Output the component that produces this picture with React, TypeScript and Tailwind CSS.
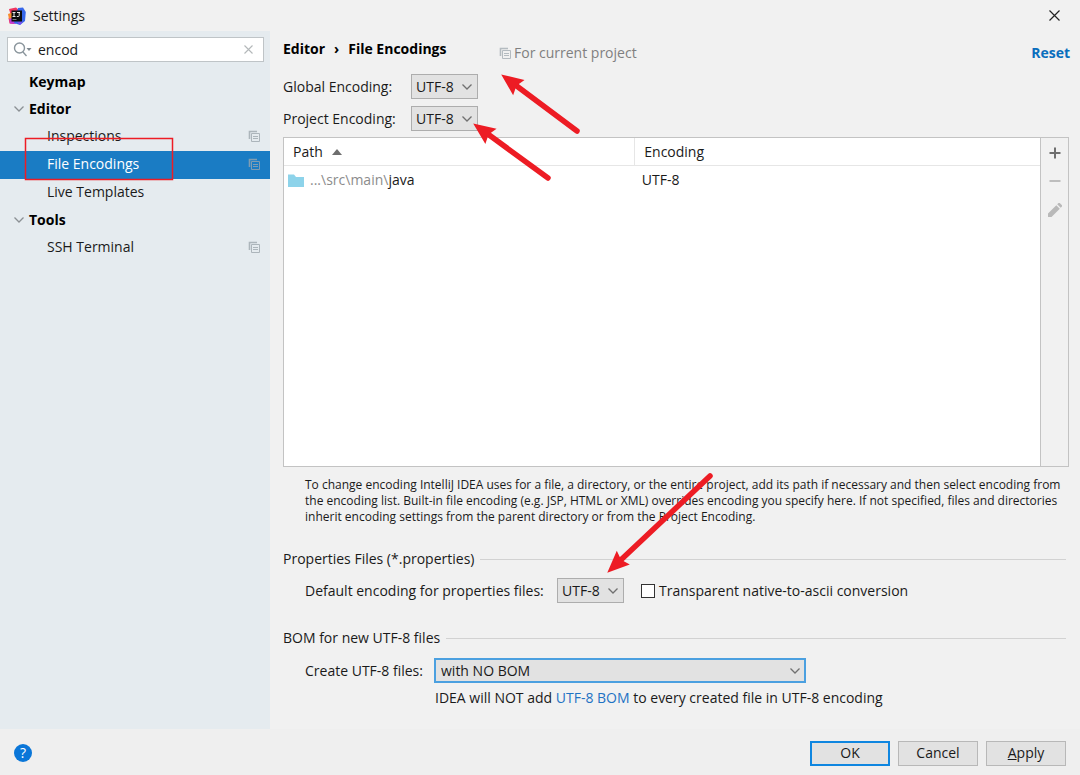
import React from 'react';

const ScopeIcon: React.FC<{ className?: string }> = ({ className = '' }) => (
    <svg width="12" height="12" viewBox="0 0 12 12" className={`shrink-0 ${className}`} fill="none" stroke="currentColor" aria-hidden="true">
        <path d="M1.5 9V1.5H9" strokeWidth="1.6" />
        <path d="M3.5 3.5h8v8h-8z" />
        <path d="M5 6.5h5 M5 8.5h5" />
    </svg>
);

const Chevron: React.FC<{ className?: string }> = ({ className = '' }) => (
    <svg width="10" height="6" viewBox="0 0 10 6" className={className} fill="none" stroke="currentColor" strokeWidth="1.3" aria-hidden="true">
        <path d="M0.5 0.5 5 5 9.5 0.5" />
    </svg>
);

const Logo: React.FC = () => (
    <svg width="18" height="18" viewBox="0 0 18 18" aria-hidden="true">
        <path d="M1 2 8 0.5 13 5 6 17 1.5 16.5 0.5 11 3 9z" fill="#f0355f" />
        <path d="M1 9 5 8 8 17 2 16.5z" fill="#c13cd8" />
        <path d="M0 7 4 5.5V11L1 12z" fill="#f98a2b" />
        <path d="M10 1 15 0.5 17.8 5 17 14 12 18 6 16z" fill="#3767ea" />
        <path d="M9 15 15 14.5 12 18z" fill="#7a4df0" />
        <path d="M3.5 3.5h10.5v11H3.5z" fill="#0b0b0d" />
        <path d="M4.5 5.5h3M6 5.5v4M4.5 9.5h3M9 5.5h3M11.2 5.5v3.2q0 0.8-0.8 0.8H8.8" fill="none" stroke="#fff" strokeWidth="0.9" />
        <path d="M4.5 12.5h4" stroke="#9a9a9a" strokeWidth="0.8" />
    </svg>
);

type ItemProps = { label: string; scoped?: boolean; selected?: boolean };

const TreeItem: React.FC<ItemProps> = ({ label, scoped, selected }) => (
    <li>
        <button
            type="button"
            className={`flex h-7 w-full items-center justify-between pb-[2px] pl-[47px] pr-[10px] text-left ${selected ? 'bg-[#1a7cc4] text-white' : ''}`}
        >
            {label}
            {scoped && <ScopeIcon className={selected ? 'text-[#7f9db2]' : 'text-[#acb5bb]'} />}
        </button>
    </li>
);

const TreeGroup: React.FC<{ label: string; open?: boolean }> = ({ label, open }) => (
    <li>
        <button type="button" className="flex h-[27px] w-full items-center pb-[2px] pl-[14px] text-left font-bold text-black">
            <span className="w-[15px]">{open && <Chevron className="text-[#8b9094]" />}</span>
            {label}
        </button>
    </li>
);

const Combo: React.FC<{ id: string; value: string; wide?: boolean }> = ({ id, value, wide }) => (
    <div className={`relative ${wide ? 'w-[372px]' : 'w-[67px]'}`}>
        <select
            id={id}
            defaultValue={value}
            className={`block h-[25px] w-full appearance-none bg-[#e2e2e2] outline-none ${wide ? 'border-2 border-[#4ba0e0] pl-[5px]' : 'border border-[#adadad] pl-1'}`}
        >
            <option>{value}</option>
        </select>
        <Chevron className="pointer-events-none absolute right-[6px] top-[10px] text-[#707070]" />
    </div>
);

const SectionTitle: React.FC<{ children: React.ReactNode }> = ({ children }) => (
    <div className="mr-1 flex items-center gap-[6px]">
        <h2>{children}</h2>
        <span className="h-px flex-1 bg-[#d2d2d2]" />
    </div>
);

const Arrow: React.FC<{ from: [number, number]; to: [number, number] }> = ({ from, to }) => {
    const angle = (Math.atan2(to[1] - from[1], to[0] - from[0]) * 180) / Math.PI;
    const length = Math.hypot(to[0] - from[0], to[1] - from[1]);
    return (
        <g transform={`translate(${from[0]} ${from[1]}) rotate(${angle})`} fill="#ed1c24">
            <path d={`M0 0H${length - 15}`} stroke="#ed1c24" strokeWidth="5.5" strokeLinecap="round" />
            <path d={`M${length + 1} 0 l-22 -9.5 l3 9.5 l-3 9.5z`} />
        </g>
    );
};

export default function App() {
    return (
        <div className="relative flex min-h-screen flex-col bg-[#f1f1f1] font-['Open_Sans','Noto_Sans_CJK_SC',sans-serif] text-sm leading-5 text-[#1a1a1a]">
            {/* Title bar */}
            <header className="flex h-[31px] items-center pl-2 pr-5">
                <Logo />
                <h1 className="ml-[7px] flex-1">Settings</h1>
                <button type="button" aria-label="Close">
                    <svg width="11" height="11" viewBox="0 0 11 11" stroke="#222" strokeWidth="1.2" aria-hidden="true">
                        <path d="M0.5 0.5 10.5 10.5M10.5 0.5 0.5 10.5" />
                    </svg>
                </button>
            </header>

            <div className="flex flex-1">
                {/* Settings tree */}
                <aside className="w-1/4 shrink-0 bg-[#e5ebef] pt-[6px]">
                    <div className="ml-[7px] mr-[6px] flex h-[25px] items-center border border-[#bfc4c7] bg-white pl-[5px] pr-[10px]">
                        <svg width="20" height="15" viewBox="0 0 20 15" fill="none" stroke="#8a959c" strokeWidth="1.4" aria-hidden="true">
                            <circle cx="6.5" cy="6" r="5" />
                            <path d="m10 10 3.5 4" />
                            <path d="M13.5 6h5L16 9z" fill="#7f8990" stroke="none" />
                        </svg>
                        <input type="text" aria-label="Search settings" defaultValue="encod" className="ml-[5px] min-w-0 flex-1 bg-transparent outline-none" />
                        <button type="button" aria-label="Clear search">
                            <svg width="9" height="9" viewBox="0 0 9 9" stroke="#b4b8ba" strokeWidth="1.1" aria-hidden="true">
                                <path d="M0.5 0.5 8.5 8.5M8.5 0.5 0.5 8.5" />
                            </svg>
                        </button>
                    </div>
                    <ul className="mt-[7px]">
                        <TreeGroup label="Keymap" />
                        <TreeGroup label="Editor" open />
                        <TreeItem label="Inspections" scoped />
                        <TreeItem label="File Encodings" scoped selected />
                        <TreeItem label="Live Templates" />
                        <TreeGroup label="Tools" open />
                        <TreeItem label="SSH Terminal" scoped />
                    </ul>
                </aside>

                <main className="flex min-w-0 flex-1 flex-col pb-[21px] pl-[13px] pr-[10px]">
                    <div className="flex h-[43px] items-center">
                        <nav className="mb-[7px] flex w-[216px] gap-[9px] font-bold text-black">
                            <span>Editor</span>
                            <span>›</span>
                            <span>File Encodings</span>
                        </nav>
                        <span className="flex flex-1 items-center gap-[3px] text-[#808080]">
                            <ScopeIcon className="text-[#b4bbc0]" />
                            For current project
                        </span>
                        <a href="#reset" className="font-bold text-[#0a6ebd]">Reset</a>
                    </div>

                    <div className="grid grid-cols-[128px_auto] items-center gap-y-[7px]">
                        <label htmlFor="global">Global Encoding:</label>
                        <Combo id="global" value="UTF-8" />
                        <label htmlFor="project">Project Encoding:</label>
                        <Combo id="project" value="UTF-8" />
                    </div>

                    {/* Per-path encodings */}
                    <div className="mr-px mt-[6px] flex flex-1 border border-[#c3c3c3]">
                        <div className="flex-1 bg-white">
                            <table className="w-full table-fixed text-left">
                                <thead>
                                    <tr className="h-[27px] border-b border-[#e6e6e6]">
                                        <th className="w-[46.4%] border-r border-[#e6e6e6] pl-[9px] pt-[2px] font-normal">
                                            <span className="flex items-center gap-[9px]">
                                                Path
                                                <svg width="10" height="6" viewBox="0 0 10 6" fill="#6e6e6e" aria-hidden="true">
                                                    <path d="M0 6 5 0l5 6z" />
                                                </svg>
                                            </span>
                                        </th>
                                        <th className="pl-[9px] pt-[2px] font-normal">Encoding</th>
                                    </tr>
                                </thead>
                                <tbody>
                                    <tr className="h-[30px]">
                                        <td className="pl-1">
                                            <span className="flex items-center gap-[6px]">
                                                <svg width="16" height="13" viewBox="0 0 16 13" fill="#8dd3ea" aria-hidden="true">
                                                    <path d="M0 0.5h6l2 2.5h8v10H0z" />
                                                </svg>
                                                <span><span className="text-[#8c8c8c]">...\src\main\</span>java</span>
                                            </span>
                                        </td>
                                        <td className="pl-[7px]">UTF-8</td>
                                    </tr>
                                </tbody>
                            </table>
                        </div>
                        <div className="flex w-[28px] flex-col items-center gap-[16px] border-l border-[#c3c3c3] pt-[9px]">
                            <button type="button" aria-label="Add">
                                <svg width="12" height="12" viewBox="0 0 12 12" className="block" stroke="#6e6e6e" strokeWidth="2" aria-hidden="true">
                                    <path d="M6 0.5v11M0.5 6h11" />
                                </svg>
                            </button>
                            <button type="button" aria-label="Remove" disabled>
                                <svg width="12" height="12" viewBox="0 0 12 12" className="block" stroke="#bdbdbd" strokeWidth="2" aria-hidden="true">
                                    <path d="M0.5 6h11" />
                                </svg>
                            </button>
                            <button type="button" aria-label="Edit" disabled>
                                <svg width="14" height="14" viewBox="0 0 14 14" className="block" fill="#b9b9b9" aria-hidden="true">
                                    <path d="M0 14v-3.5L8.3 2.2l3.5 3.5L3.5 14z M9.2 1.3 10.5 0h1.2L14 2.3v1.2l-1.3 1.3z" />
                                </svg>
                            </button>
                        </div>
                    </div>

                    <p className="mt-[10px] whitespace-nowrap pl-[22px] text-xs leading-4">
                        To change encoding IntelliJ IDEA uses for a file, a directory, or the entire project, add its path if necessary and then select encoding from
                        <br />
                        the encoding list. Built-in file encoding (e.g. JSP, HTML or XML) overrides encoding you specify here. If not specified, files and directories
                        <br />
                        inherit encoding settings from the parent directory or from the Project Encoding.
                    </p>

                    <section className="mt-[24px]">
                        <SectionTitle>Properties Files (*.properties)</SectionTitle>
                        <div className="mt-[9px] flex items-center pl-[22px]">
                            <label htmlFor="properties" className="w-[252px]">Default encoding for properties files:</label>
                            <Combo id="properties" value="UTF-8" />
                            <label className="ml-[17px] flex items-center gap-1">
                                <input type="checkbox" className="size-[14px] appearance-none border border-[#333] bg-white" />
                                Transparent native-to-ascii conversion
                            </label>
                        </div>
                    </section>

                    <section className="mt-[25px]">
                        <SectionTitle>BOM for new UTF-8 files</SectionTitle>
                        <div className="mt-[10px] flex items-center pl-[22px]">
                            <label htmlFor="bom" className="w-[129px]">Create UTF-8 files:</label>
                            <Combo id="bom" value="with NO BOM" wide />
                        </div>
                        <p className="mt-[5px] pl-[152px]">
                            IDEA will NOT add <a href="#bom" className="text-[#1f73c4]">UTF-8 BOM</a> to every created file in UTF-8 encoding
                        </p>
                    </section>
                </main>
            </div>

            <footer className="flex h-[46px] items-center gap-[8px] bg-[#efefef] pl-[14px] pr-[14px] pt-[2px]">
                <button type="button" aria-label="Help" className="mr-auto size-[18px] rounded-full bg-[#0a76d8] leading-[18px] text-white">?</button>
                <button type="button" className="h-[25px] w-20 border-2 border-[#0f86e0] bg-[#e2e2e2]">OK</button>
                <button type="button" className="h-[25px] w-20 border border-[#b8b8b8] bg-[#e2e2e2]">Cancel</button>
                <button type="button" className="h-[25px] w-20 border border-[#b8b8b8] bg-[#e2e2e2]"><u>A</u>pply</button>
            </footer>

            {/* Red call-outs */}
            <svg width="1080" height="775" viewBox="0 0 1080 775" className="pointer-events-none absolute left-0 top-0" aria-hidden="true">
                <rect x="25.5" y="138.5" width="147" height="41" fill="none" stroke="#ed1c24" strokeWidth="1.5" />
                <Arrow from={[577, 131]} to={[502, 75]} />
                <Arrow from={[548, 178]} to={[474, 124]} />
                <Arrow from={[710, 476]} to={[608, 572]} />
            </svg>
        </div>
    );
}
